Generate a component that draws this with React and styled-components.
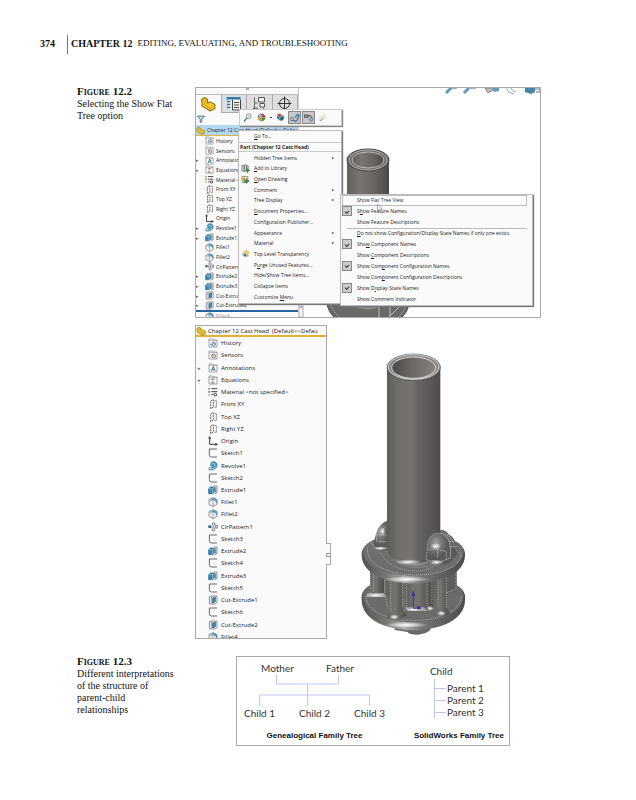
import styled, { createGlobalStyle, css } from 'styled-components'

const modelTree = [
  { name: 'History', icon: 'history' },
  { name: 'Sensors', icon: 'sensors' },
  { name: 'Annotations', icon: 'annotations', open: true },
  { name: 'Equations', icon: 'equations', open: true },
  { name: 'Material <not specified>', icon: 'material' },
  { name: 'Front XY', icon: 'plane' },
  { name: 'Top XZ', icon: 'plane' },
  { name: 'Right YZ', icon: 'plane' },
  { name: 'Origin', icon: 'origin' },
]

const featureTree = [
  ...modelTree,
  { name: 'Revolve1', icon: 'revolve', open: true },
  { name: 'Extrude1', icon: 'extrude', open: true },
  { name: 'Fillet1', icon: 'fillet' },
  { name: 'Fillet2', icon: 'fillet' },
  { name: 'CirPattern1', icon: 'pattern' },
  { name: 'Extrude2', icon: 'extrude', open: true },
  { name: 'Extrude3', icon: 'extrude', open: true },
  { name: 'Cut-Extrude1', icon: 'cut', open: true },
  { name: 'Cut-Extrude2', icon: 'cut', open: true },
  { name: 'Fillet4', icon: 'fillet', rolledBack: true },
]

const flatTree = [
  ...modelTree,
  { name: 'Sketch1', icon: 'sketch' },
  { name: 'Revolve1', icon: 'revolve' },
  { name: 'Sketch2', icon: 'sketch' },
  { name: 'Extrude1', icon: 'extrude' },
  { name: 'Fillet1', icon: 'fillet' },
  { name: 'Fillet2', icon: 'fillet' },
  { name: 'CirPattern1', icon: 'pattern' },
  { name: 'Sketch3', icon: 'sketch' },
  { name: 'Extrude2', icon: 'extrude' },
  { name: 'Sketch4', icon: 'sketch' },
  { name: 'Extrude3', icon: 'extrude' },
  { name: 'Sketch5', icon: 'sketch' },
  { name: 'Cut-Extrude1', icon: 'cut' },
  { name: 'Sketch6', icon: 'sketch' },
  { name: 'Cut-Extrude2', icon: 'cut' },
  { name: 'Fillet4', icon: 'fillet' },
]

// "&" marks the access key of an item
const menuItems = [
  { label: '&Go To...' },
  { label: 'Part (Chapter 12 Cast Head)', heading: true },
  { label: 'Hidden Tree Items', more: true },
  { label: '&Add to Library', icon: 'library' },
  { label: '&Open Drawing', icon: 'drawing' },
  { label: 'Comment', more: true },
  { label: 'Tree Display', more: true },
  { label: '&Document Properties...' },
  { label: 'Configuration Publisher...' },
  { label: 'Appearance', more: true },
  { label: 'Material', more: true },
  { label: 'Top Level Transparency', icon: 'transparency' },
  { label: 'P&urge Unused Features...' },
  { label: 'Hide/Show Tree Items...' },
  { label: 'Collapse Items' },
  { label: 'Customize &Menu' },
]

const displayItems = [
  { label: 'S&how Feature Names', checked: true },
  { label: 'Show Feature Descriptions' },
  { label: '&Do not show Configuration/Display State Names if only one exists', divided: true },
  { label: 'Sho&w Component Names', checked: true },
  { label: 'Show &Component Descriptions' },
  { label: 'Show Com&ponent Configuration Names', checked: true },
  { label: 'Show Com&ponent Configuration Descriptions' },
  { label: 'Show D&isplay State Names', checked: true },
  { label: 'Show Comment Indicator' },
]

const folder = (
  <>
    <path d="M3 3h10l2 3h12v21H3z" fill="#fff" stroke="#777" strokeWidth="2" />
    <path d="M3 8h24" stroke="#999" strokeWidth="2" />
  </>
)

const glyphs = {
  history: (
    <>
      {folder}
      <circle cx="17" cy="18" r="6" fill="#dceaf2" stroke="#41728e" strokeWidth="2" />
      <path d="M17 14v4h4M6 18l4 4 4-4" fill="none" stroke="#356a89" strokeWidth="2" />
    </>
  ),
  sensors: (
    <>
      {folder}
      <circle cx="17" cy="18" r="6" fill="#eee" stroke="#555" strokeWidth="2" />
      <path d="M11 12l7 8" stroke="#c5483c" strokeWidth="3" />
    </>
  ),
  annotations: (
    <>
      {folder}
      <path d="M10 24l6-14 5 14M12 19h7" fill="none" stroke="#3478a0" strokeWidth="3" />
    </>
  ),
  equations: (
    <>
      {folder}
      <path d="M21 12H10l6 6-6 6h11" fill="none" stroke="#555" strokeWidth="2" />
    </>
  ),
  material: (
    <>
      <path d="M1 3h5v5H1z" fill="#8a8a8a" />
      <path d="M1 12h5v5H1z" fill="#3f8fc0" />
      <path d="M1 21h5v5H1z" fill="#e2b53b" />
      <path d="M10 5h18M10 14h18M10 23h6" stroke="#444" strokeWidth="3" />
      <circle cx="22" cy="23" r="4" fill="none" stroke="#333" strokeWidth="3" />
    </>
  ),
  plane: (
    <>
      <path d="M8 6l8-4v22l-8 5z" fill="none" stroke="#666" strokeWidth="3" strokeDasharray="6 2" />
      <path d="M19 5h6v20h-6" fill="none" stroke="#666" strokeWidth="2" />
    </>
  ),
  origin: (
    <path
      d="M5 6v19h20M2 8l3-6 3 6M22 22l6 3-6 3"
      fill="none"
      stroke="#333"
      strokeWidth="3"
    />
  ),
  sketch: <path d="M27 3H4v17q0 7 7 7h16" fill="none" stroke="#666" strokeWidth="3" />,
  revolve: (
    <>
      <path
        d="M10 4c9-5 18 1 17 9-1 10-12 16-24 13l1-7c6 2 10 1 11-3l-7-2z"
        fill="#4b9cc4"
        stroke="#28627f"
        strokeWidth="2"
      />
      <path d="M12 8c6-2 10 2 8 6M5 23c8 2 15-1 19-7" fill="none" stroke="#c9e6f4" strokeWidth="2" />
      <circle cx="7" cy="22" r="4" fill="#d5e6ee" stroke="#456" />
    </>
  ),
  extrude: (
    <>
      <path d="M17 3h10v20l-8 5" fill="#eee" stroke="#666" strokeWidth="2" />
      <path d="M2 11l5-5h12v15l-5 5H2z" fill="#3389b6" stroke="#245a78" strokeWidth="2" />
      <path d="M2 11h12v15M14 11l5-5" fill="none" stroke="#a4d3ea" strokeWidth="2" />
      <path d="M23 7v16" stroke="#444" strokeWidth="2" />
    </>
  ),
  fillet: (
    <>
      <path d="M3 8l12-6 12 6v14l-12 7-12-7z" fill="#f1f1f1" stroke="#666" strokeWidth="2" />
      <path d="M3 8l12 5v16" fill="none" stroke="#888" strokeWidth="2" />
      <path d="M10 7l8-4 8 5v10q-1-7-9-8z" fill="#4ba4d0" stroke="#2b6c91" />
    </>
  ),
  pattern: (
    <>
      <path d="M1 10h8v8H1z" fill="#2f7098" />
      <g fill="#eee" stroke="#555" strokeWidth="2">
        <circle cx="17" cy="6" r="4" />
        <circle cx="17" cy="23" r="4" />
        <path d="M23 10h6v8h-6z" />
      </g>
      <path d="M10 12l4 3-4 3M16 15h4" stroke="#333" strokeWidth="2" fill="none" />
    </>
  ),
  cut: (
    <>
      <path d="M4 6l6-3h17v20l-6 4H4z" fill="#eee" stroke="#666" strokeWidth="2" />
      <path d="M10 3v21" stroke="#777" strokeWidth="2" />
      <path d="M14 9l8-3v14l-8 4z" fill="#388eb9" stroke="#1c516f" strokeWidth="2" />
    </>
  ),
  part: (
    <>
      <path
        d="M3 7l5-4 6 3v7l5-2 9 5v7l-9 5-15-9z"
        fill="#f5c52c"
        stroke="#96700f"
        strokeWidth="2"
        strokeLinejoin="round"
      />
      <path d="M3 7l6 3 5-4M9 10v7l10 6 9-6M19 23v5" fill="none" stroke="#b48716" strokeWidth="1" />
    </>
  ),
  properties: (
    <>
      <path d="M5 3h23v24H5z" fill="#f4f4f4" />
      <path d="M1 2h28v5H1z" fill="#327cad" />
      <path d="M2 11h7M2 17h7M2 23h7" stroke="#327cad" strokeWidth="3" />
      <path d="M13 7v21h16V7M16 13h10M16 18h10M16 23h10" fill="none" stroke="#444" strokeWidth="2" />
    </>
  ),
  configurations: (
    <>
      <path d="M5 3v23h6M5 14h6" fill="none" stroke="#666" strokeWidth="2" />
      <path d="M13 3h12v9H13zM16 15h9v7h-9z" fill="#f4f4f4" stroke="#555" strokeWidth="2" />
      <path d="M3 24h8v4H3zM22 24l6 5" stroke="#666" strokeWidth="2" fill="none" />
    </>
  ),
  target: (
    <>
      <circle cx="15" cy="15" r="10" fill="none" stroke="#333" strokeWidth="2" />
      <path d="M15 1v28M1 15h28" stroke="#333" strokeWidth="2" />
    </>
  ),
  filter: (
    <path d="M2 4h26L18 16v9l-6 4V16z" fill="#bcdbea" stroke="#35637c" strokeWidth="3" />
  ),
  magnifier: (
    <>
      <circle cx="19" cy="11" r="8" fill="#f4fafc" stroke="#555" strokeWidth="2" />
      <path d="M13 17L3 28" stroke="#4284aa" strokeWidth="5" />
      <path d="M16 11h6" stroke="#555" strokeWidth="2" />
    </>
  ),
  appearance: (
    <>
      <path d="M15 15V2C8 2 2 8 2 15z" fill="#3779b5" />
      <path d="M15 15V2c7 0 13 6 13 13z" fill="#d63932" />
      <path d="M15 15v13C8 28 2 22 2 15z" fill="#dd9b29" />
      <path d="M15 15v13c7 0 13-6 13-13z" fill="#459246" />
      <circle cx="11" cy="9" r="4" fill="#fff" opacity=".6" />
    </>
  ),
  bodies: (
    <>
      <path d="M3 5l10-3 7 6-8 6z" fill="#cf3b45" />
      <path d="M3 8l9 6v11l-9-8z" fill="#2e70a8" />
      <path d="M13 15l11-8 4 9-9 11-7-3z" fill="#2e946f" />
      <circle cx="20" cy="19" r="5" fill="#2b5a88" />
    </>
  ),
  link: (
    <>
      <path d="M2 14h8v9H2zM6 23h10" fill="none" stroke="#555" strokeWidth="2" />
      <path
        d="M15 14l7-9q5-2 5 4l-6 9M13 22q4 7 9-1l3-5"
        fill="none"
        stroke="#2e7faf"
        strokeWidth="4"
      />
    </>
  ),
  rollback: (
    <>
      <path d="M2 6h10v7H2zM12 8h7q5 1 5 8" fill="none" stroke="#444" strokeWidth="3" />
      <path d="M17 15q9-3 9 4t-7 6l-4-7" fill="#9bbfd1" stroke="#466" strokeWidth="2" />
    </>
  ),
  faded: (
    <g opacity=".5">
      <path d="M6 15L20 3l8 8-6 10H8z" fill="#e8daa0" stroke="#b5b095" />
      <circle cx="11" cy="17" r="7" fill="#d5dadd" />
      <path d="M5 22l4 4 8-9" stroke="#68747b" strokeWidth="4" fill="none" />
    </g>
  ),
  library: (
    <>
      <path d="M3 5h7v19H3zM11 3h7v21h-7zM19 6h5v15h-5z" fill="#d9e4e9" stroke="#555" strokeWidth="2" />
      <path d="M22 15v14M15 22h14" stroke="#299044" strokeWidth="5" />
    </>
  ),
  drawing: (
    <>
      <path d="M3 5h20v20H3z" fill="#f7e7aa" stroke="#666" strokeWidth="2" />
      <path d="M10 27V17h7v-6l11 9-11 9v-5" fill="#48915b" stroke="#365f3d" />
      <path d="M5 9h9v9H5z" fill="#bf963e" />
    </>
  ),
  transparency: (
    <>
      <path d="M8 12l9-9 11 8-8 10z" fill="#edcd59" stroke="#b39b59" />
      <path d="M2 16l7-6 9 5-3 9-8 2z" fill="#c0c9d0" />
      <path d="M8 20l6-4 5 5-5 6z" fill="#346e99" />
      <path d="M20 17l6 2-2 7-7 1z" fill="#e8b83d" />
    </>
  ),
}

const Icon = ({ name, size }) => (
  <Glyph viewBox="0 0 30 30" $size={size} aria-hidden="true">
    {glyphs[name]}
  </Glyph>
)

const AccessLabel = ({ text }) => {
  const at = text.indexOf('&')
  if (at < 0) return <span>{text}</span>

  return (
    <span>
      {text.slice(0, at)}
      <u>{text[at + 1]}</u>
      {text.slice(at + 2)}
    </span>
  )
}

const Tree = ({ items, compact }) => (
  <TreeList $compact={compact}>
    {items.map((item) => (
      <TreeRow key={item.name} $compact={compact} $rolledBack={item.rolledBack}>
        <Expander>{item.open && '▸'}</Expander>
        <Icon name={item.icon} size={compact ? 9 : 10} />
        <span>{item.name}</span>
      </TreeRow>
    ))}
  </TreeList>
)

const ContextMenu = () => (
  <Menu>
    {menuItems.map((item) =>
      item.heading ? (
        <MenuHeading key={item.label}>{item.label}</MenuHeading>
      ) : (
        <MenuButton key={item.label} type="button">
          <MenuIcon>{item.icon && <Icon name={item.icon} size={9} />}</MenuIcon>
          <AccessLabel text={item.label} />
          {item.more && <More>▸</More>}
        </MenuButton>
      )
    )}
  </Menu>
)

const DisplayMenu = () => (
  <Submenu>
    <FlatTreeButton type="button">Show Flat Tree View</FlatTreeButton>
    {displayItems.map((item) => (
      <ToggleItem key={item.label} $divided={item.divided}>
        <Tick type="checkbox" defaultChecked={item.checked} />
        <AccessLabel text={item.label} />
      </ToggleItem>
    ))}
    <Cursor viewBox="0 0 12 18" aria-hidden="true">
      <path d="M1 1v14l4-4 3 6 2-1-3-6h4z" fill="#fff" stroke="#555" />
    </Cursor>
  </Submenu>
)

const ViewportScene = () => (
  <Scene viewBox="0 0 241 229" preserveAspectRatio="xMinYMin slice" aria-hidden="true">
    <defs>
      <linearGradient id="tube">
        <stop offset="0" stopColor="#62605e" />
        <stop offset=".3" stopColor="#777471" />
        <stop offset=".65" stopColor="#686563" />
        <stop offset="1" stopColor="#4c4a49" />
      </linearGradient>
    </defs>
    <g fill="none" strokeWidth="1">
      <path d="M147 5l5-5M165 5l5-5" stroke="#5c9dc0" strokeWidth="3" />
      <path d="M152 0q3 2 6 0M171 0q3 2 6 0" stroke="#999" />
      <path d="M186 0l3 5 5-3V0z" fill="#bbb" stroke="#888" />
      <path d="M193 0h7v3l-5 1z" fill="#5c9dc0" />
      <path d="M207 0q2 5 8 6M212 0q1 3 5 4" stroke="#88abc0" />
      <path d="M226 0v4l6 2 4-2V0z" fill="#4487ad" />
      <path d="M231 0v5M234 1h7v3h-4" stroke="#678" />
    </g>
    <ellipse cx="69" cy="214" rx="41" ry="27" fill="#6b6967" stroke="#454443" />
    <path d="M31 213q4 23 38 24t39-24" fill="none" stroke="#aaa8a6" strokeDasharray="2 1" />
    <path d="M80 214v20M91 214v15M91 228l11-11" stroke="#c4c2c0" strokeWidth="1" />
    <path d="M48 72v140h42V72z" fill="url(#tube)" />
    <path d="M49 212q20 13 40 0v3q-20 13-40 0z" fill="#8b8987" />
    <ellipse cx="69" cy="72" rx="21" ry="11" fill="#716f6d" stroke="#474645" />
    <ellipse cx="69" cy="72" rx="19" ry="10" fill="none" stroke="#aaa9a7" />
    <ellipse cx="69" cy="72" rx="16" ry="8" fill="url(#tube)" stroke="#b9b7b5" />
    {/* panel splitter */}
    <path d="M0 216h4v13H0z" fill="#fafafa" stroke="#aaa" />
    <circle cx="2" cy="219" r="1" fill="none" stroke="#999" />
  </Scene>
)

const CastHead = () => (
  <Model viewBox="0 0 375 900" role="img" aria-label="Chapter 12 Cast Head">
    <defs>
      <linearGradient id="steel">
        <stop offset="0" stopColor="#5d5c5a" />
        <stop offset=".2" stopColor="#706e6b" />
        <stop offset=".45" stopColor="#767370" />
        <stop offset=".6" stopColor="#656361" />
        <stop offset="1" stopColor="#4e4d4c" />
      </linearGradient>
      <linearGradient id="bore">
        <stop offset="0" stopColor="#4a4948" />
        <stop offset=".45" stopColor="#6a6765" />
        <stop offset="1" stopColor="#858280" />
      </linearGradient>
      <linearGradient id="rim">
        <stop offset="0" stopColor="#525150" />
        <stop offset=".25" stopColor="#7c7a77" />
        <stop offset=".42" stopColor="#aeacaa" />
        <stop offset=".58" stopColor="#777573" />
        <stop offset="1" stopColor="#4b4a49" />
      </linearGradient>
      <radialGradient id="boss" cx=".4" cy=".35">
        <stop offset="0" stopColor="#a5a3a1" />
        <stop offset=".5" stopColor="#777573" />
        <stop offset="1" stopColor="#5b5958" />
      </radialGradient>
      <radialGradient id="shine">
        <stop offset="0" stopColor="#fff" />
        <stop offset="1" stopColor="#fff" stopOpacity="0" />
      </radialGradient>
    </defs>
    <g transform="translate(0 465)">
      {/* bottom flange */}
      <path d="M132 380l3 10 38 6q4 8 30 8 25-2 38-14v-15z" fill="#6a6866" />
      <path d="M35 290C35 210 345 210 345 290v10c0 121-310 121-310 0z" fill="url(#rim)" />
      <path d="M39 286C45 214 335 214 341 286c0 108-302 108-302 0z" fill="#6d6b69" />
      <path
        d="M48 288c2 98 282 98 286 0"
        fill="none"
        stroke="#cbc9c7"
        strokeWidth="2"
        strokeDasharray="3 3"
      />
      {/* ribs between the flanges */}
      <path d="M60 195h260v80q-130 50-260 0z" fill="#676563" />
      <path d="M60 200h42v84H60z" fill="url(#steel)" />
      <path d="M170 230h80v92q-40 22-80 4z" fill="url(#steel)" />
      <path d="M286 210h34v64h-34z" fill="#605e5c" />
      <path d="M122 235h36v95l12 16-26 14-34-7 12-20z" fill="url(#steel)" />
      <path d="M264 235h26v90l10 16-24 12-24-9 12-18z" fill="url(#steel)" />
      <g fill="none" stroke="#c4c2c0" strokeWidth="2" strokeDasharray="4 3">
        <path d="M62 205v76M70 215v62M104 240v44M122 245v92M158 247v75M170 245v78M231 245v72M246 240v72M264 240v84M289 228v98M318 210v54M170 324l-22 22M50 285l55 4 10 36M290 278l30-12" />
      </g>
      <path d="M53 279h48l8 12H48zM165 322h56l12 11h-60z" fill="#aaa8a5" />
      {/* top flange */}
      <path d="M35 161C35 84 345 84 345 161v6c-4 111-306 111-310 0z" fill="url(#rim)" />
      <path d="M39 153C45 82 336 82 341 153c-1 99-302 99-302 0z" fill="#706e6c" />
      <path
        d="M53 142c-14 106 289 110 280 14"
        fill="none"
        stroke="#cecccb"
        strokeWidth="2"
        strokeDasharray="3 3"
      />
      {/* bosses */}
      <path d="M72 139c0-18 7-64 36-75h12v82q-25 12-48-7z" fill="url(#boss)" />
      <path d="M80 125V98l28-17M80 105h30M86 125h27M62 126l14 18h35l8 10" fill="none" stroke="#d9d7d5" strokeWidth="2" strokeDasharray="4 2" />
      <path d="M224 178c6-11 4-72 24-81q36-18 50 8c13 4 22 24 29 53l-29 32q-42 14-74-12z" fill="url(#boss)" />
      <path
        d="M229 180l3-36c1-40 24-52 43-43 18 7 27 22 27 72l-30 12-38-13M234 149h29v27M263 149l26 5v25M290 105c23 9 20 34 37 56M300 125h20M302 140h22"
        fill="none"
        stroke="#dddbd9"
        strokeWidth="2"
        strokeDasharray="4 3"
      />
      <path
        d="M110 153c26 57 116 62 149 28M92 158c28 63 142 72 174 27"
        fill="none"
        stroke="#bcbab8"
        strokeWidth="2"
        strokeDasharray="3 3"
      />
    </g>
    {/* tube */}
    <path d="M111 67v550c8 30 44 43 80 43 38 0 64-10 80-38V67z" fill="url(#steel)" />
    <path d="M130 640c28 28 90 33 116 2-26 18-82 18-116-2z" fill="#8f8d8b" />
    <path
      d="M229 645l3-36c1-36 20-50 43-43 18 7 27 22 27 72l-30 12z"
      fill="url(#boss)"
      stroke="#c9c7c5"
      strokeWidth="2"
      strokeDasharray="4 3"
    />
    <path d="M234 614h29v27M263 614l26 5v25" fill="none" stroke="#d5d3d1" strokeWidth="2" strokeDasharray="4 3" />
    <ellipse cx="191" cy="67" rx="80" ry="40" fill="#888684" stroke="#494847" strokeWidth="2" />
    <ellipse cx="191" cy="66" rx="76" ry="37" fill="none" stroke="#d5d4d2" strokeWidth="3" />
    <ellipse cx="191" cy="68" rx="66" ry="32" fill="url(#bore)" stroke="#dededb" strokeWidth="3" />
    <g transform="translate(0 465)" fill="url(#shine)">
      <ellipse cx="175" cy="186" rx="40" ry="8" />
      <ellipse cx="170" cy="238" rx="70" ry="9" />
      <ellipse cx="168" cy="375" rx="66" ry="9" />
      <ellipse cx="257" cy="139" rx="17" ry="10" />
      <ellipse cx="259" cy="187" rx="22" ry="8" />
      <ellipse cx="91" cy="145" rx="20" ry="6" />
      <ellipse cx="98" cy="94" rx="8" ry="12" />
      <ellipse cx="77" cy="286" rx="27" ry="6" />
      <ellipse cx="133" cy="351" rx="15" ry="8" />
      <ellipse cx="240" cy="325" rx="12" ry="8" />
      <ellipse cx="274" cy="340" rx="14" ry="8" />
      <ellipse cx="190" cy="329" rx="24" ry="5" />
    </g>
    <g transform="translate(0 465)" fill="none" stroke="#2e36a8" strokeWidth="3">
      <path d="M190 325v-38M190 325l20-2" />
      <path d="M186 287l4-12 4 12zM203 319l10 5-10 3z" fill="#2e36a8" />
    </g>
  </Model>
)

const App = () => (
  <Page>
    <GlobalStyle />
    <RunningHead>
      <PageNumber>374</PageNumber>
      <Chapter>
        <strong>CHAPTER 12</strong>
        <ChapterTitle>EDITING, EVALUATING, AND TROUBLESHOOTING</ChapterTitle>
      </Chapter>
    </RunningHead>

    <Figure>
      <Caption>
        <FigureNumber>Figure 12.2</FigureNumber>
        Selecting the Show Flat
        <br />
        Tree option
      </Caption>
      <Shots>
        <Window>
          <FeaturePanel>
            <Strip>
              <Grip />
            </Strip>
            <Tabs>
              <Tab type="button" aria-label="Feature tree" $active>
                <Icon name="part" size={16} />
              </Tab>
              <Tab type="button" aria-label="Properties">
                <Icon name="properties" size={15} />
              </Tab>
              <Tab type="button" aria-label="Configurations">
                <Icon name="configurations" size={15} />
              </Tab>
              <Tab type="button" aria-label="Dimensions">
                <Icon name="target" size={15} />
              </Tab>
            </Tabs>
            <FilterBar>
              <Icon name="filter" size={8} />
            </FilterBar>
            <PartTitle $selected>
              <Icon name="part" size={9} />
              <span>Chapter 12 Cast Head (Default&lt;&lt;Defau</span>
            </PartTitle>
            <Tree items={featureTree} compact />
          </FeaturePanel>
          <ViewportScene />
          <Toolbar>
            <Tool type="button" aria-label="Zoom to selection">
              <Icon name="magnifier" size={9} />
            </Tool>
            <Tool type="button" aria-label="Appearances">
              <Icon name="appearance" size={9} />
            </Tool>
            <Dot />
            <Tool type="button" aria-label="Bodies">
              <Icon name="bodies" size={9} />
            </Tool>
            <Tool type="button" aria-label="Link" $pressed>
              <Icon name="link" size={10} />
            </Tool>
            <Tool type="button" aria-label="Rollback" $pressed>
              <Icon name="rollback" size={10} />
            </Tool>
            <Tool type="button" aria-label="Isolate">
              <Icon name="faded" size={9} />
            </Tool>
          </Toolbar>
          <ContextMenu />
          <DisplayMenu />
        </Window>

        <FlatView>
          <FlatPanel>
            <FlatClip>
              <PartTitle>
                <Icon name="part" size={10} />
                <span>Chapter 12 Cast Head&nbsp; (Default&lt;&lt;Defau</span>
              </PartTitle>
              <Tree items={flatTree} />
            </FlatClip>
            <PanelHandle />
          </FlatPanel>
          <CastHead />
        </FlatView>
      </Shots>
    </Figure>

    <Figure>
      <Caption>
        <FigureNumber>Figure 12.3</FigureNumber>
        Different interpretations
        <br />
        of the structure of
        <br />
        parent-child
        <br />
        relationships
      </Caption>
      <FamilyTrees>
        <Genealogy>
          <Couple>
            <span>Mother</span>
            <span>Father</span>
          </Couple>
          <Branches viewBox="0 0 140 31" aria-hidden="true">
            <path d="M32 0v9h62V0M63 9v22M15 31V20h110v11" />
          </Branches>
          <Children>
            <span>Child 1</span>
            <span>Child 2</span>
            <span>Child 3</span>
          </Children>
          <TreeCaption>Genealogical Family Tree</TreeCaption>
        </Genealogy>
        <SolidWorksTree>
          <Root>Child</Root>
          <Parents>
            <li>Parent 1</li>
            <li>Parent 2</li>
            <li>Parent 3</li>
          </Parents>
          <TreeCaption>SolidWorks Family Tree</TreeCaption>
        </SolidWorksTree>
      </FamilyTrees>
    </Figure>
  </Page>
)

export default App

const GlobalStyle = createGlobalStyle`
  * {
    box-sizing: border-box;
  }

  body {
    margin: 0;
    background: #fff;
    color: #111;
    font-family: 'Liberation Serif', serif;
  }

  button {
    margin: 0;
    padding: 0;
    border: 0;
    background: none;
    color: inherit;
    font: inherit;
    text-align: left;
  }

  ul {
    margin: 0;
    padding: 0;
    list-style: none;
  }
`

const uiText = css`
  font-family: 'Open Sans', 'Noto Sans', sans-serif;
  color: #222;
  white-space: nowrap;
`

const Page = styled.main`
  padding: 35px 95px 20px 40px;
`

const RunningHead = styled.header`
  display: flex;
  margin-bottom: 31px;
  font-size: 10px;
  line-height: 17px;
`

const PageNumber = styled.strong`
  width: 27px;
`

const Chapter = styled.div`
  display: flex;
  gap: 5px;
  padding: 0 0 2px 3px;
  border-left: 1px solid #777;
  white-space: nowrap;
`

const ChapterTitle = styled.span`
  font-size: 9px;
`

const Figure = styled.section`
  display: grid;
  grid-template-columns: 106px minmax(0, 1fr);
  column-gap: 12px;
  padding-left: 37px;
  margin-bottom: 16px;
`

const Caption = styled.div`
  font-size: 10px;
  line-height: 12px;
`

const FigureNumber = styled.strong`
  display: block;
  margin-bottom: 1px;
  font-size: 11px;
  font-variant: small-caps;
`

const Shots = styled.div`
  display: flex;
  flex-direction: column;
  gap: 7px;
  padding-top: 2px;
`

const Glyph = styled.svg`
  flex: none;
  width: ${({ $size }) => $size}px;
  height: ${({ $size }) => $size}px;
`

const Window = styled.div`
  ${uiText}
  position: relative;
  display: flex;
  height: 231px;
  border: 1px solid #aaa;
  font-size: 5px;
`

const FeaturePanel = styled.div`
  display: flex;
  flex-direction: column;
  width: 103px;
  overflow: hidden;
  border-right: 1px solid #ccc;
  background: #fafafa;
`

const Strip = styled.div`
  display: flex;
  justify-content: center;
  flex: none;
  height: 7px;
  border-bottom: 1px solid #bbb;
`

const Grip = styled.i`
  width: 3px;
  height: 2px;
  border: 1px solid #aaa;
`

const Tabs = styled.div`
  display: grid;
  grid-template-columns: repeat(4, 1fr);
  flex: none;
  height: 18px;
`

const Tab = styled.button`
  display: flex;
  align-items: center;
  justify-content: center;
  border-right: 1px solid #aaa;
  border-bottom: ${({ $active }) => ($active ? 'none' : '1px solid #aaa')};
  background: ${({ $active }) => ($active ? '#fafafa' : '#dedede')};
`

const FilterBar = styled.div`
  display: flex;
  align-items: center;
  flex: none;
  height: 12px;
  padding-left: 1px;
`

const PartTitle = styled.div`
  display: flex;
  align-items: center;
  flex: none;
  gap: 2px;
  height: 11px;
  border-bottom: ${({ $selected }) => ($selected ? 1 : 2)}px solid #e0b23c;
  background: ${({ $selected }) => ($selected ? '#b5d8f1' : 'none')};
`

const TreeList = styled.ul`
  display: grid;
  grid-auto-rows: minmax(0, 1fr);
  flex: none;
  height: ${({ $compact }) => ($compact ? 184 : 306)}px;
`

const TreeRow = styled.li`
  display: flex;
  align-items: center;
  gap: ${({ $compact }) => ($compact ? 2 : 3)}px;
  padding-left: ${({ $compact }) => ($compact ? 0 : 2)}px;
  line-height: 8px;
  ${({ $rolledBack }) =>
    $rolledBack &&
    css`
      border-top: 2px solid #2864a0;
      color: #999;
    `}
`

const Expander = styled.span`
  width: 7px;
  color: #666;
  font-size: 5px;
`

const Scene = styled.svg`
  flex: 1;
  min-width: 0;
  height: 100%;
`

const Toolbar = styled.div`
  position: absolute;
  top: 21px;
  left: 43px;
  display: flex;
  align-items: center;
  gap: 1px;
  height: 17px;
  width: 103px;
  padding-left: 1px;
  border: 1px solid #ccc;
  background: #fafafa;
  box-shadow: 1px 1px 1px #888;
`

const Tool = styled.button`
  display: flex;
  align-items: center;
  justify-content: center;
  width: 13px;
  height: 13px;
  border: 1px solid ${({ $pressed }) => ($pressed ? '#888' : 'transparent')};
  background: ${({ $pressed }) => ($pressed ? '#c8c8c8' : 'none')};
`

const Dot = styled.i`
  width: 2px;
  height: 1px;
  margin: 0 1px;
  background: #444;
`

const Menu = styled.div`
  position: absolute;
  top: 42px;
  left: 42px;
  display: grid;
  grid-auto-rows: minmax(0, 1fr);
  width: 104px;
  height: 174px;
  padding-bottom: 1px;
  border: 1px solid #bbb;
  background: #fafafa;
  box-shadow: 1px 1px 1px #777;
  line-height: 8px;
`

const MenuHeading = styled.strong`
  padding-left: 1px;
  border-top: 1px solid #ccc;
  border-bottom: 1px solid #ccc;
`

const MenuButton = styled.button`
  display: flex;
  align-items: center;
`

const MenuIcon = styled.span`
  display: flex;
  width: 15px;
  padding-left: 2px;
`

const More = styled.span`
  margin-left: auto;
  padding-right: 7px;
  font-size: 4px;
`

const Submenu = styled.div`
  position: absolute;
  top: 106px;
  left: 144px;
  display: grid;
  grid-auto-rows: minmax(0, 1fr);
  width: 193px;
  height: 112px;
  padding-bottom: 1px;
  border: 1px solid #bbb;
  background: #fafafa;
  box-shadow: 1px 1px 1px #777;
  line-height: 8px;
`

const FlatTreeButton = styled.button`
  margin: 0 5px 0 1px;
  padding-left: 14px;
  border: 1px solid #bbb;
  background: #fff;
`

const ToggleItem = styled.label`
  display: flex;
  align-items: center;
  gap: 5px;
  padding-left: 1px;
  ${({ $divided }) =>
    $divided &&
    css`
      background: linear-gradient(#bbb, #bbb) 6px 0 / 180px 1px no-repeat;
    `}
`

const Tick = styled.input`
  appearance: none;
  display: flex;
  align-items: center;
  justify-content: center;
  width: 10px;
  height: 10px;
  margin: 0;

  &:checked {
    border: 1px solid #888;
    background: #ccc;
  }

  &:checked::after {
    content: '';
    width: 3px;
    height: 2px;
    border: solid #333;
    border-width: 0 0 1px 1px;
    transform: rotate(-45deg);
  }
`

const Cursor = styled.svg`
  position: absolute;
  top: 9px;
  left: 36px;
  width: 6px;
  height: 9px;
`

const FlatView = styled.div`
  display: flex;
  gap: 23px;
`

const FlatPanel = styled.div`
  ${uiText}
  position: relative;
  flex: none;
  width: 132px;
  border: 1px solid #aaa;
  background: #fafafa;
  font-size: 6px;
`

const FlatClip = styled.div`
  height: 312px;
  overflow: hidden;
`

const PanelHandle = styled.i`
  position: absolute;
  top: 217px;
  right: -5px;
  width: 5px;
  height: 22px;
  border: 1px solid #aaa;
  border-left: 0;
  background: #fafafa;

  &::after {
    content: '';
    position: absolute;
    top: 9px;
    left: 0;
    width: 3px;
    height: 2px;
    border: 1px solid #999;
  }
`

const Model = styled.svg`
  flex: none;
  width: 125px;
  height: 300px;
  margin-top: 20px;
  margin-bottom: -6px;
`

const FamilyTrees = styled.div`
  display: flex;
  justify-content: space-between;
  height: 90px;
  margin: 1px 31px 0 41px;
  padding: 0 5px 0 7px;
  border: 1px solid #aaa;
  color: #333;
  font-family: Lato, sans-serif;
  font-size: 10px;
  line-height: 12px;
  white-space: nowrap;
`

const Genealogy = styled.div`
  display: flex;
  flex-direction: column;
  width: 141px;
  padding-top: 5px;
`

const Couple = styled.div`
  display: flex;
  justify-content: space-between;
  padding: 0 31px 0 17px;
`

const Branches = styled.svg`
  height: 31px;
  margin: 1px 0;
  fill: none;
  stroke: #c3c3f0;
`

const Children = styled.div`
  display: flex;
  justify-content: space-between;
`

const TreeCaption = styled.strong`
  margin-top: auto;
  padding-bottom: 3px;
  color: #111;
  font-family: 'Liberation Sans Narrow', 'Liberation Sans', sans-serif;
  font-size: 8px;
  text-align: center;
`

const SolidWorksTree = styled.div`
  display: flex;
  flex-direction: column;
  padding-top: 8px;
`

const Root = styled.span`
  padding-left: 16px;
`

const Parents = styled.ul`
  margin: 2px 0 0 20px;
  padding-top: 3px;
  border-left: 1px solid #c3c3f0;

  li {
    display: flex;
    align-items: center;
    gap: 1px;
  }

  li::before {
    content: '';
    width: 11px;
    border-top: 1px solid #c3c3f0;
  }
`
